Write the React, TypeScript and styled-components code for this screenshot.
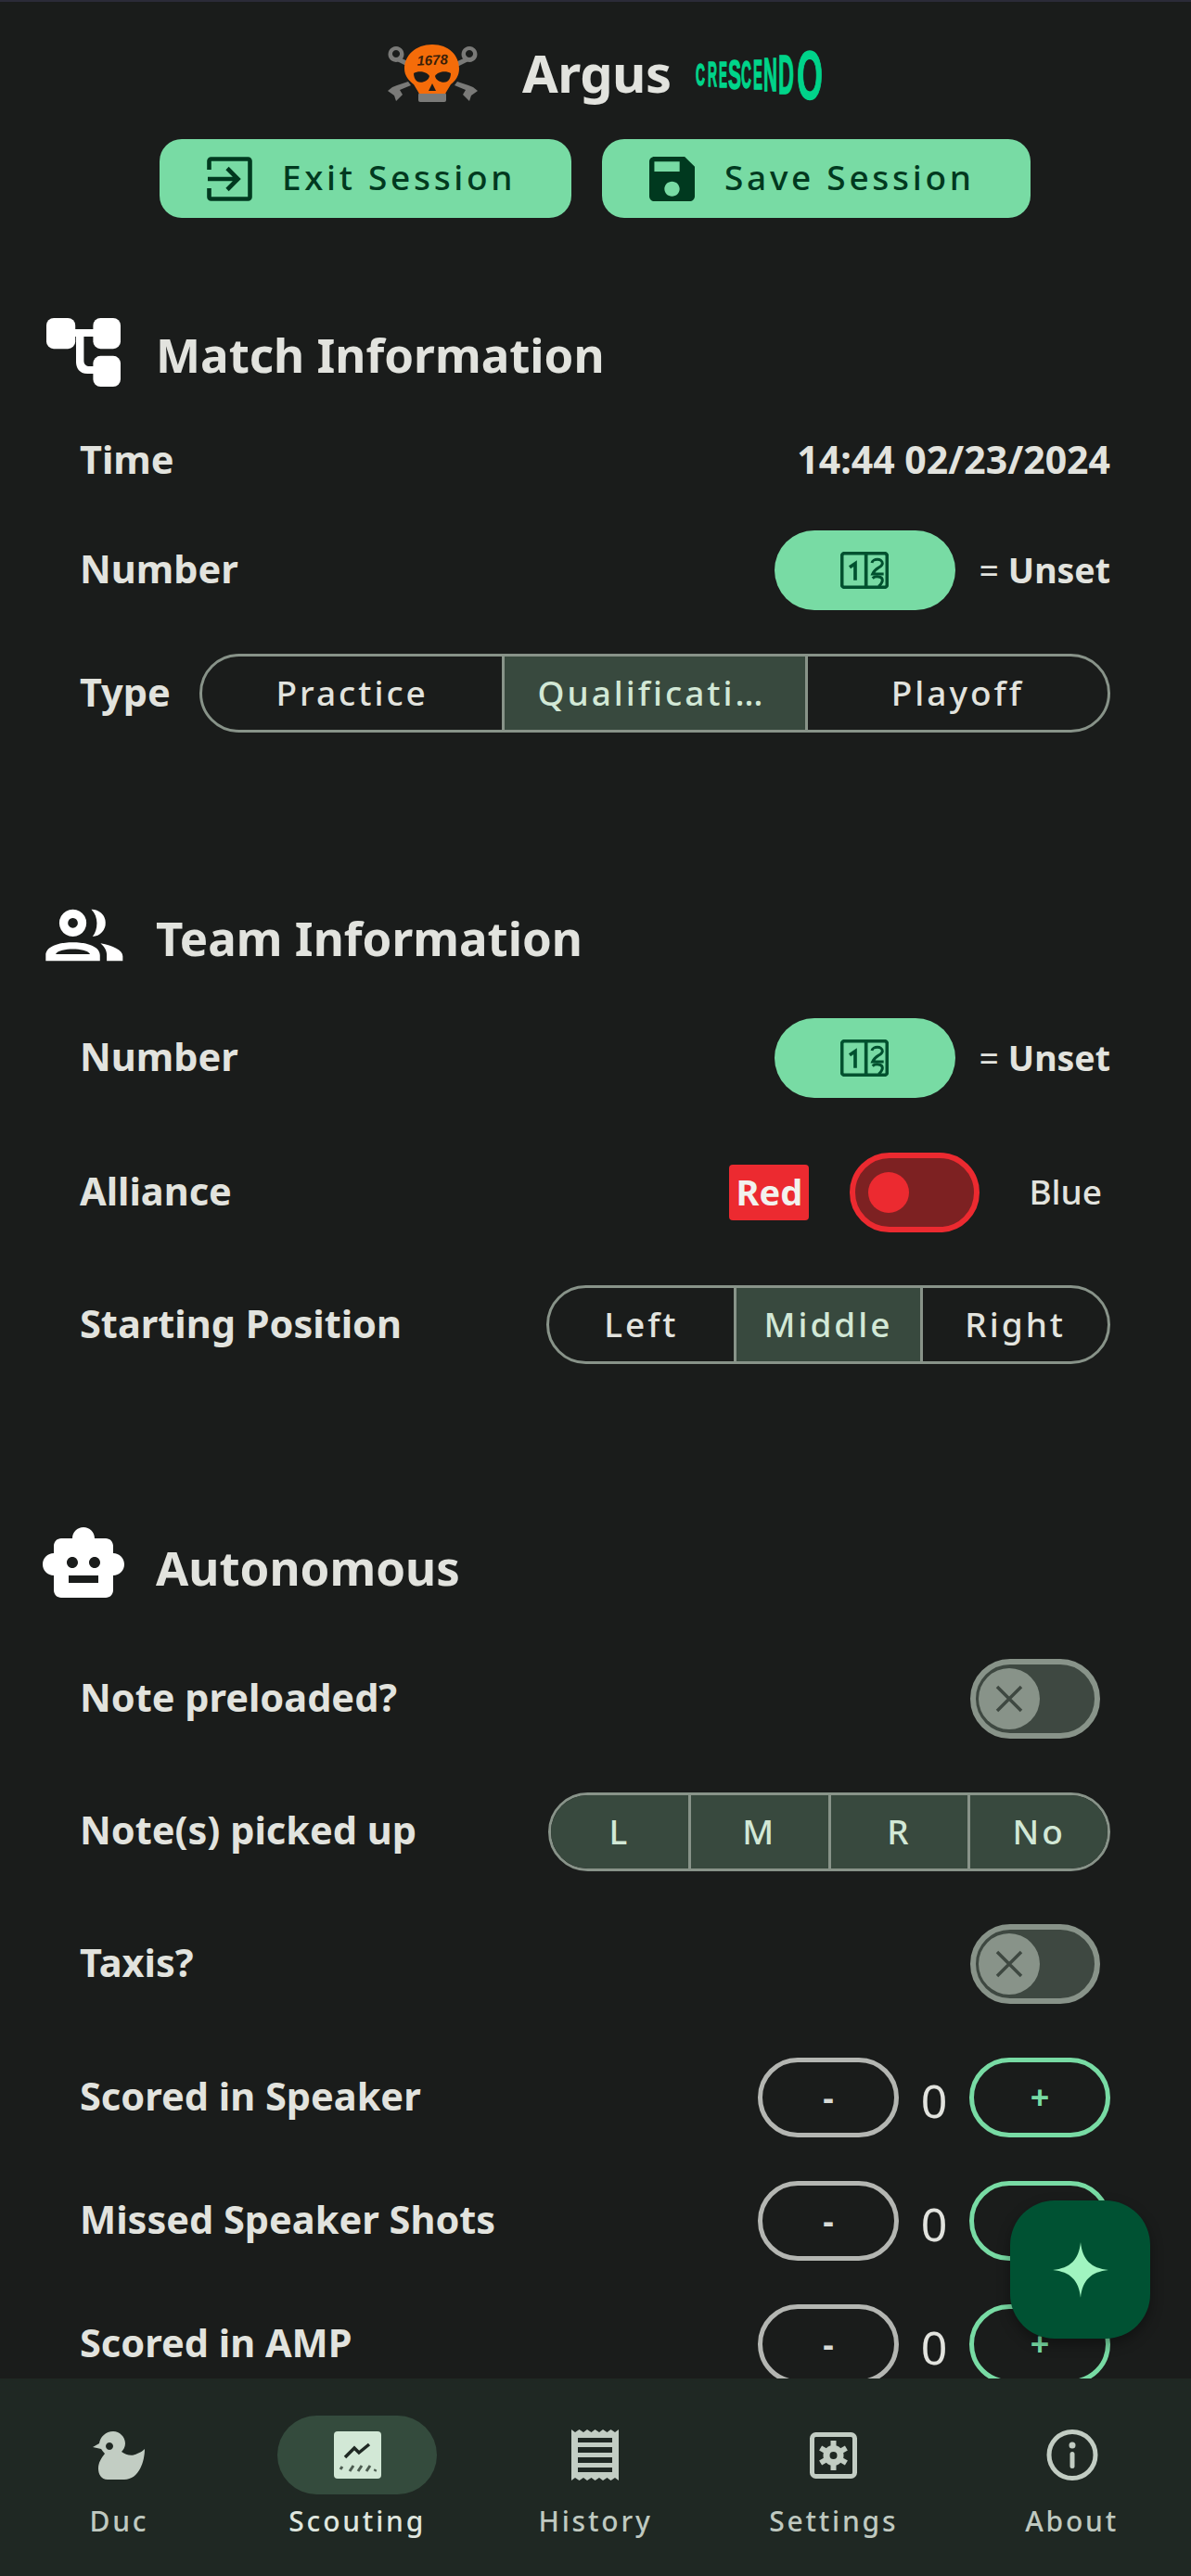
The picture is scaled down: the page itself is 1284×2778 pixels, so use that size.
import React from 'react';
import styled, { createGlobalStyle } from 'styled-components';

const Global = createGlobalStyle`
  html, body { margin: 0; padding: 0; background: #1a1c1b; }
  * { box-sizing: border-box; }
`;

const FONT = `"Noto Sans", "Liberation Sans", sans-serif`;

const Page = styled.div`
  position: relative;
  width: 1284px;
  height: 2778px;
  display: flex;
  flex-direction: column;
  overflow: hidden;
  background: #1a1c1b;
  border-top: 2px solid #2b2b38;
  font-family: ${FONT};
  color: #e2e3de;
`;
const Main = styled.main`
  flex: 1;
  min-height: 0;
  overflow: hidden;
  padding-top: 40px;
`;
const Brand = styled.div`
  height: 76px;
  display: flex;
  align-items: center;
  padding-left: 418px;
`;
const BrandName = styled.h1`
  margin: 0 26px 0 48px;
  font-size: 56px;
  font-weight: 700;
  line-height: 76px;
  letter-spacing: -0.5px;
  padding-bottom: 4px;
`;
const Actions = styled.div`
  margin-top: 32px;
  display: flex;
  justify-content: center;
  gap: 33px;
  padding-right: 1px;
`;
const ActionButton = styled.button<{ $w: number }>`
  width: ${p => p.$w}px;
  height: 85px;
  border: 0;
  border-radius: 24px;
  background: #78dba4;
  color: #00391f;
  display: flex;
  align-items: center;
  gap: 32px;
  padding: 0 0 0 51px;
  font-family: ${FONT};
  font-size: 37px;
  font-weight: 500;
  letter-spacing: 3.7px;
`;
const ActionText = styled.span`
  padding-bottom: 5px;
`;
const SectionHead = styled.div<{ $top: number }>`
  margin-top: ${p => p.$top}px;
  height: 96px;
  padding-left: 42px;
  display: flex;
  align-items: center;
  gap: 30px;
`;
const IconBox = styled.span`
  width: 96px;
  height: 96px;
  flex: none;
  display: flex;
  align-items: center;
  justify-content: center;
`;
const SectionTitle = styled.h2`
  margin: 0;
  padding-top: 7px;
  font-size: 51px;
  font-weight: 700;
  line-height: 89px;
`;
const Row = styled.div<{ $top: number; $h?: number }>`
  margin-top: ${p => p.$top}px;
  height: ${p => p.$h ?? 86}px;
  padding: 0 87px 0 86px;
  display: flex;
  align-items: center;
  justify-content: space-between;
`;
const Label = styled.span`
  font-size: 41.5px;
  font-weight: 700;
  white-space: nowrap;
  padding-bottom: 4px;
`;
const Value = styled.span`
  font-size: 41px;
  font-weight: 700;
  white-space: nowrap;
  padding-bottom: 4px;
`;
const Right = styled.div`
  display: flex;
  align-items: center;
`;
const NumberPill = styled.button`
  width: 195px;
  height: 86px;
  border: 0;
  border-radius: 43px;
  background: #78dba4;
  display: flex;
  align-items: center;
  justify-content: center;
  padding: 0;
`;
const Unset = styled.span`
  margin-left: 26px;
  font-size: 37.5px;
  font-weight: 700;
  white-space: nowrap;
  padding-bottom: 2px;
`;
const Eq = styled.span`
  font-weight: 400;
`;
const Segmented = styled.div<{ $w: number }>`
  width: ${p => p.$w}px;
  height: 85px;
  display: flex;
  border: 3px solid #889389;
  border-radius: 43px;
  overflow: hidden;
`;
const Segment = styled.div<{ $on?: boolean }>`
  flex: 1 1 0;
  min-width: 0;
  display: flex;
  align-items: center;
  justify-content: center;
  padding: 0 14px 2px;
  background: ${p => (p.$on ? '#38493e' : 'transparent')};
  color: ${p => (p.$on ? '#d2e8d6' : '#e2e3de')};
  font-size: 37px;
  font-weight: 500;
  letter-spacing: 3px;
  & + & { border-left: 3px solid #889389; }
`;
const SegmentText = styled.span`
  max-width: 253px;
  overflow: hidden;
  white-space: nowrap;
  text-overflow: ellipsis;
`;
const RedBadge = styled.span`
  width: 86px;
  height: 60px;
  border-radius: 4px;
  background: #ec2a30;
  display: flex;
  align-items: center;
  justify-content: center;
  font-size: 38px;
  font-weight: 700;
  color: #f2f2ee;
  margin-right: 44px;
  padding-bottom: 3px;
`;
const Blue = styled.span`
  margin: 0 9px 0 53px;
  font-size: 37px;
  font-weight: 500;
  padding-bottom: 4px;
`;
const Switch = styled.div<{ $red?: boolean }>`
  width: 140px;
  height: 86px;
  border-radius: 43px;
  border: 6px solid ${p => (p.$red ? '#ec2a30' : '#889389')};
  background: ${p => (p.$red ? '#7d2122' : '#3e4841')};
  display: flex;
  align-items: center;
  padding-left: ${p => (p.$red ? 14 : 3)}px;
`;
const RedThumb = styled.span`
  width: 44px;
  height: 44px;
  border-radius: 50%;
  background: #ec2a30;
`;
const GreyThumb = styled.span`
  width: 66px;
  height: 66px;
  border-radius: 50%;
  background: #889389;
  display: flex;
  align-items: center;
  justify-content: center;
`;
const SwitchSlot = styled.div`
  margin-right: 11px;
`;
const Counter = styled.div`
  display: flex;
  align-items: center;
`;
const Step = styled.button<{ $plus?: boolean }>`
  width: 152px;
  height: 86px;
  padding: 0;
  border-radius: 43px;
  background: transparent;
  border: 5px solid ${p => (p.$plus ? '#78dba4' : '#b4b6b2')};
  color: ${p => (p.$plus ? '#78dba4' : '#d8dad6')};
  font-family: ${FONT};
  font-size: 36px;
  font-weight: 700;
  line-height: 1;
`;
const Count = styled.span`
  width: 76px;
  text-align: center;
  font-size: 50px;
  font-weight: 400;
  padding-top: 5px;
`;
const Fab = styled.button`
  position: absolute;
  left: 1089px;
  top: 2371px;
  width: 151px;
  height: 149px;
  border: 0;
  border-radius: 48px;
  padding: 0;
  background: #005233;
  box-shadow: 0 6px 14px rgba(0, 0, 0, 0.35);
  display: flex;
  align-items: center;
  justify-content: center;
`;
const Nav = styled.nav`
  height: 213px;
  flex: none;
  background: #1f2823;
  display: grid;
  grid-template-columns: repeat(5, 1fr);
`;
const NavItem = styled.div`
  display: flex;
  flex-direction: column;
  align-items: center;
  padding-top: 40px;
`;
const NavPill = styled.div<{ $on?: boolean }>`
  width: 172px;
  height: 85px;
  border-radius: 43px;
  background: ${p => (p.$on ? '#344b3d' : 'transparent')};
  display: flex;
  align-items: center;
  justify-content: center;
`;
const NavLabel = styled.span<{ $on?: boolean }>`
  margin-top: 8px;
  font-size: 30px;
  font-weight: 500;
  letter-spacing: 2.8px;
  color: ${p => (p.$on ? '#dfe6df' : '#bfc9c0')};
`;
const LogoSvg = styled.svg`
  overflow: visible;
`;

const DARK = '#00391f';
const NAVC = '#c2cdc3';

const SkullLogo = () => (
  <svg width="97" height="64" viewBox="0 0 97 64">
    <g fill="#7a7a78">
      <path fillRule="evenodd" d="M9 2a8.500 8.500 0 1 1-.01 0ZM9 6a4 4 0 1 0 .01 0Z" />
      <path fillRule="evenodd" d="M88 2a8.500 8.500 0 1 1-.01 0ZM88 6a4 4 0 1 0 .01 0Z" />
      <path d="M13 14 26 20 22 24 10 18Z M84 14 71 20 75 24 87 18Z" />
      <path d="M25 44 L13 49 L16 54 L9 61 L7 55 L0 50 L5 46 L10 44 L22 40 Z" />
      <path d="M72 44 L84 49 L81 54 L88 61 L90 55 L97 50 L92 46 L87 44 L75 40 Z" />
      <rect x="33" y="52" width="30" height="10" rx="2" />
    </g>
    <path fill="#f56c09" d="M48 0 C66 0 77 12 77 26 C77 34 73 39 68 43 L62 53 H34 L28 43 C23 39 18 34 18 26 C18 12 30 0 48 0Z" />
    <path fill="#1a1c1b" d="M28 31 C33 28 42 29 45 34 C44 40 36 42 32 40 C29 38 28 34 28 31Z M68 31 C63 28 54 29 51 34 C52 40 60 42 64 40 C67 38 68 34 68 31Z M48 42 L52 50 H44Z" />
    <text x="48" y="22" textAnchor="middle" fontFamily="Liberation Sans, sans-serif" fontStyle="italic" fontSize="15" fontWeight="700" fill="#3a1f08" transform="rotate(-3 48 16)">1678</text>
  </svg>
);

const CRESC: [string, number, number, number, number][] = [
  ['C', 0, 10, 24, 0.722], ['R', 13, 10, 26, 0.722], ['E', 25, 9, 28, 0.667], ['S', 35, 14, 32, 0.667], ['C', 49, 11, 30, 0.722],
  ['E', 62, 10, 32, 0.667], ['N', 73, 15, 36, 0.722], ['D', 89, 17, 42, 0.722], ['O', 109, 28, 54, 0.778],
];
const Crescendo = () => (
  <LogoSvg width="137" height="56" viewBox="0 0 137 56">
    {CRESC.map(([c, x, w, h, adv], i) => {
      const fs = h / 0.72;
      return (
        <text
          key={i}
          transform={`translate(${x} ${28 + h / 2}) scale(${w / (fs * adv)} 1)`}
          fontFamily="Liberation Sans, sans-serif"
          fontWeight="700"
          fontSize={fs}
          fill="#00d48a"
          stroke="#00d48a"
          strokeWidth="1.4"
        >
          {c}
        </text>
      );
    })}
  </LogoSvg>
);

const ExitIcon = () => (
  <svg width="49" height="48" viewBox="0 0 49 48" fill="none" stroke={DARK} strokeWidth="4.6">
    <path d="M2.500 14V4.500a2 2 0 0 1 2-2h40a2 2 0 0 1 2 2v39a2 2 0 0 1-2 2h-40a2 2 0 0 1-2-2V34" />
    <path d="M1 24H33M22 12.500 33.500 24 22 35.500" />
  </svg>
);
const SaveIcon = () => (
  <svg width="49" height="48" viewBox="3 3 18 18" fill={DARK} preserveAspectRatio="none">
    <path d="M17 3H5c-1.110 0-2 .9-2 2v14c0 1.100.89 2 2 2h14c1.100 0 2-.9 2-2V7l-4-4zm-5 16c-1.660 0-3-1.340-3-3s1.340-3 3-3 3 1.340 3 3-1.340 3-3 3zm3-10H5V5h10v4z" />
  </svg>
);
const TreeIcon = () => (
  <svg width="96" height="96" viewBox="0 0 24 24" fill="#fff">
    <rect x="2" y="3" width="7.800" height="8.300" rx="2" />
    <rect x="14.600" y="3" width="7.400" height="8.300" rx="2" />
    <rect x="14.600" y="13.200" width="7.400" height="8.300" rx="2" />
    <path d="M9 6h6v2h-2.900v6.500c0 1 .7 1.500 1.500 1.500H15v2h-1.900c-2.300 0-3.100-1.700-3.100-3.200V8H9z" />
  </svg>
);
const GroupIcon = () => (
  <svg width="88" height="60" viewBox="50 50 265 180" fill="#fff">
    <path fillRule="evenodd" d="M148 58a44 44 0 1 1-.01 0Zm0 28a16 16 0 1 0 .01 0Z" />
    <path d="M208 58a44 44 0 0 1 4 88c9-12 14-26 14-44 0-16-6-32-18-44Z" />
    <path fillRule="evenodd" d="M60 225v-18c0-28 40-42 88-42s88 14 88 42v18Zm32-22h112c-8-12-32-16-56-16s-48 4-56 16Z" />
    <path d="M238 168c40 8 72 22 72 42v15h-52v-20c0-14-8-26-20-37Z" />
  </svg>
);
const RobotIcon = () => (
  <svg width="96" height="96" viewBox="0 0 24 24" fill="#fff">
    <path d="M20 9V7c0-1.100-.9-2-2-2h-3c0-1.660-1.340-3-3-3S9 3.340 9 5H6c-1.100 0-2 .9-2 2v2c-1.660 0-3 1.340-3 3s1.340 3 3 3v4c0 1.100.9 2 2 2h12c1.100 0 2-.9 2-2v-4c1.660 0 3-1.340 3-3s-1.340-3-3-3zM7.500 11.500c0-.83.67-1.500 1.500-1.500s1.500.67 1.500 1.500S9.830 13 9 13s-1.500-.67-1.500-1.500zM16 17H8v-2h8v2zm-1-4c-.83 0-1.500-.67-1.500-1.500S14.170 10 15 10s1.500.67 1.500 1.500S15.830 13 15 13z" />
  </svg>
);
const NumberIcon = () => (
  <svg width="52" height="40" viewBox="0 0 156 120" fill="none" stroke="#00512f" strokeWidth="11">
    <rect x="5" y="5" width="146" height="110" rx="8" />
    <path d="M83 5V115" />
    <path d="M30 50 48 38V92" />
    <path d="M102 36c2-14 34-16 34 2 0 12-24 14-32 34h36" strokeWidth="9" />
    <path d="M104 86c8-8 32-8 32 6 0 8-6 14-12 20" strokeWidth="9" />
  </svg>
);
const CloseMark = () => (
  <svg width="30" height="30" viewBox="0 0 30 30" stroke="#3e4841" strokeWidth="3.500">
    <path d="M2 2 28 28M28 2 2 28" />
  </svg>
);
const StarIcon = () => (
  <svg width="60" height="60" viewBox="0 0 60 60" fill="#a0f4c0">
    <path d="M30 0C32 19 41 28 60 30C41 32 32 41 30 60C28 41 19 32 0 30C19 28 28 19 30 0Z" />
  </svg>
);
const DuckIcon = () => (
  <svg width="56" height="52" viewBox="0 0 56 52" fill={NAVC}>
    <path fillRule="evenodd" d="M22 0C29 0 35 6 35 13C35 17 33 20 31 22C36 26 43 27 48 24C51 23 54 21 56 19C56 32 50 52 34 52H16C9 52 6 46 6 40C6 34 9 29 13 24C11 22 10 20 9 19L0 17L7 13C8 6 14 0 22 0ZM18 12a4 4 0 1 0 .01 0Z" />
  </svg>
);
const ChartIcon = () => (
  <svg width="51" height="51" viewBox="0 0 51 51" fill="none">
    <rect width="51" height="51" rx="4" fill="#d2e8d6" />
    <path d="M12 28 22 18l5 5 11-9" stroke="#1f2823" strokeWidth="3.500" />
    <path d="M7 41l2-3M17 43l4-6M26 43l4-6M35 43l4-6M44 43l1-2" stroke="#4c5c50" strokeWidth="3" />
  </svg>
);
const ReceiptIcon = () => (
  <svg width="51" height="55" viewBox="0 0 51 55">
    <path
      fill={NAVC}
      d="M0 0 4 3 8.500 0 13 3 17 0 21.500 3 25.500 0 30 3 34 0 38.500 3 42.500 0 47 3 51 0V55L47 52 42.500 55 38.500 52 34 55 30 52 25.500 55 21.500 52 17 55 13 52 8.500 55 4 52 0 55Z"
    />
    <rect x="7" y="9" width="37" height="37" fill="#1f2823" />
    <rect x="7" y="14" width="37" height="5" fill={NAVC} />
    <rect x="7" y="25" width="37" height="5" fill={NAVC} />
    <rect x="7" y="36" width="37" height="5" fill={NAVC} />
  </svg>
);
const GearBoxIcon = () => (
  <svg width="51" height="50" viewBox="0 0 51 50" fill="none">
    <rect x="2.500" y="2.500" width="46" height="45" rx="4" stroke={NAVC} strokeWidth="5" />
    <g stroke={NAVC} strokeWidth="6">
      <path d="M25.500 9V41M11.600 17 39.400 33M39.400 17 11.600 33" />
    </g>
    <circle cx="25.500" cy="25" r="11" fill={NAVC} />
    <circle cx="25.500" cy="25" r="4" fill="#1f2823" />
  </svg>
);
const InfoIcon = () => (
  <svg width="56" height="55" viewBox="0 0 56 55" fill="none">
    <circle cx="28" cy="27.500" r="25" stroke={NAVC} strokeWidth="5" />
    <circle cx="28" cy="17" r="3.500" fill={NAVC} />
    <rect x="25.500" y="24" width="5" height="18" rx="2.500" fill={NAVC} />
  </svg>
);

const Options = ({ items, on, w }: { items: string[]; on: string[]; w: number }) => (
  <Segmented $w={w}>
    {items.map(t => (
      <Segment key={t} $on={on.includes(t)}>
        <SegmentText>{t}</SegmentText>
      </Segment>
    ))}
  </Segmented>
);

const OffSwitch = () => (
  <SwitchSlot>
    <Switch>
      <GreyThumb>
        <CloseMark />
      </GreyThumb>
    </Switch>
  </SwitchSlot>
);

const CounterRow = ({ label, top }: { label: string; top: number }) => (
  <Row $top={top}>
    <Label>{label}</Label>
    <Counter>
      <Step>-</Step>
      <Count>0</Count>
      <Step $plus>+</Step>
    </Counter>
  </Row>
);

const NumberRow = ({ top }: { top: number }) => (
  <Row $top={top}>
    <Label>Number</Label>
    <Right>
      <NumberPill>
        <NumberIcon />
      </NumberPill>
      <Unset>
        <Eq>=</Eq> Unset
      </Unset>
    </Right>
  </Row>
);

const NAV = [
  { label: 'Duc', icon: <DuckIcon /> },
  { label: 'Scouting', icon: <ChartIcon />, on: true },
  { label: 'History', icon: <ReceiptIcon /> },
  { label: 'Settings', icon: <GearBoxIcon /> },
  { label: 'About', icon: <InfoIcon /> },
];

export default function App() {
  return (
    <Page>
      <Global />
      <Main>
        <Brand>
          <SkullLogo />
          <BrandName>Argus</BrandName>
          <Crescendo />
        </Brand>
        <Actions>
          <ActionButton $w={444}>
            <ExitIcon />
            <ActionText>Exit Session</ActionText>
          </ActionButton>
          <ActionButton $w={462}>
            <SaveIcon />
            <ActionText>Save Session</ActionText>
          </ActionButton>
        </Actions>

        <SectionHead $top={96}>
          <IconBox>
            <TreeIcon />
          </IconBox>
          <SectionTitle>Match Information</SectionTitle>
        </SectionHead>
        <Row $top={45} $h={50}>
          <Label>Time</Label>
          <Value>14:44 02/23/2024</Value>
        </Row>
        <NumberRow top={50} />
        <Row $top={47} $h={85}>
          <Label>Type</Label>
          <Options items={['Practice', 'Qualification', 'Playoff']} on={['Qualification']} w={982} />
        </Row>

        <SectionHead $top={170}>
          <IconBox>
            <GroupIcon />
          </IconBox>
          <SectionTitle>Team Information</SectionTitle>
        </SectionHead>
        <NumberRow top={42} />
        <Row $top={59}>
          <Label>Alliance</Label>
          <Right>
            <RedBadge>Red</RedBadge>
            <Switch $red>
              <RedThumb />
            </Switch>
            <Blue>Blue</Blue>
          </Right>
        </Row>
        <Row $top={57} $h={85}>
          <Label>Starting Position</Label>
          <Options items={['Left', 'Middle', 'Right']} on={['Middle']} w={608} />
        </Row>

        <SectionHead $top={168}>
          <IconBox>
            <RobotIcon />
          </IconBox>
          <SectionTitle>Autonomous</SectionTitle>
        </SectionHead>
        <Row $top={54}>
          <Label>Note preloaded?</Label>
          <OffSwitch />
        </Row>
        <Row $top={57}>
          <Label>Note(s) picked up</Label>
          <Options items={['L', 'M', 'R', 'No']} on={['L', 'M', 'R', 'No']} w={606} />
        </Row>
        <Row $top={57}>
          <Label>Taxis?</Label>
          <OffSwitch />
        </Row>
        <CounterRow label="Scored in Speaker" top={58} />
        <CounterRow label="Missed Speaker Shots" top={47} />
        <CounterRow label="Scored in AMP" top={47} />
      </Main>
      <Nav>
        {NAV.map(n => (
          <NavItem key={n.label}>
            <NavPill $on={n.on}>{n.icon}</NavPill>
            <NavLabel $on={n.on}>{n.label}</NavLabel>
          </NavItem>
        ))}
      </Nav>
      <Fab>
        <StarIcon />
      </Fab>
    </Page>
  );
}
